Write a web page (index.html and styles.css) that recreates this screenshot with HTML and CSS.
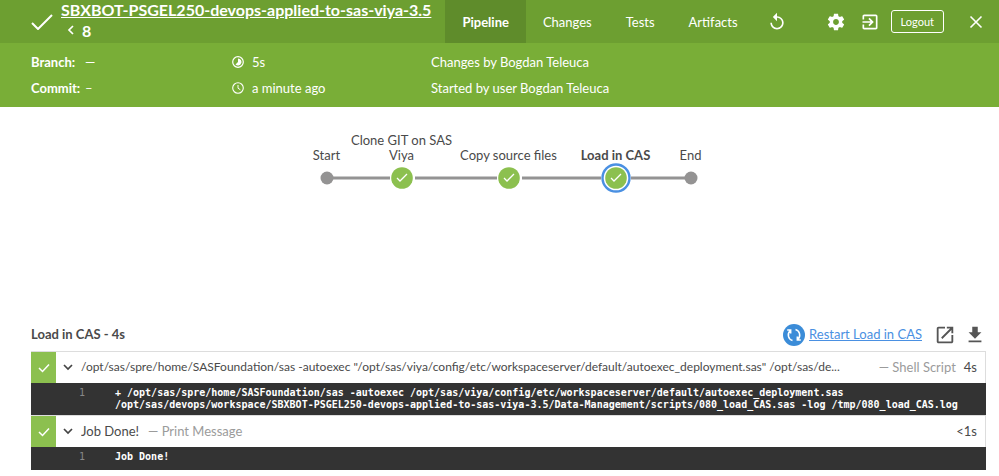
FILE: index.html
```html
<!DOCTYPE html>
<html lang="en">
<head>
    <meta charset="UTF-8">
    <meta name="viewport" content="width=device-width, initial-scale=1.0">
    <title>SBXBOT-PSGEL250-devops-applied-to-sas-viya-3.5 / 8</title>
    <link rel="stylesheet" href="styles.css">
</head>
<body>
    <header class="topbar">
        <svg class="status" width="22" height="16" viewBox="0 0 22 16"><path d="M1 9l6 6L21 1" fill="none" stroke="#fff" stroke-width="2"/></svg>
        <h1 class="title">
            <a href="#">SBXBOT-PSGEL250-devops-applied-to-sas-viya-3.5</a>
            <span class="run"><svg width="7" height="10" viewBox="0 0 7 10"><path d="M6 1L2 5l4 4" fill="none" stroke="#fff" stroke-width="1.700"/></svg>8</span>
        </h1>
        <nav class="tabs">
            <a class="tab active" href="#">Pipeline</a>
            <a class="tab" href="#">Changes</a>
            <a class="tab" href="#">Tests</a>
            <a class="tab" href="#">Artifacts</a>
        </nav>
        <div class="actions">
            <button class="icon-button rerun" aria-label="Rerun">
                <svg width="20" height="20" viewBox="0 0 24 24"><path fill="#fff" d="M12 5V1L7 6l5 5V7c3.31 0 6 2.690 6 6s-2.690 6-6 6-6-2.690-6-6H4c0 4.420 3.580 8 8 8s8-3.580 8-8-3.580-8-8-8z"/></svg>
            </button>
            <button class="icon-button settings" aria-label="Settings">
                <svg width="20" height="20" viewBox="0 0 24 24"><path fill="#fff" d="M19.430 12.980c.04-.32.07-.64.07-.98s-.03-.66-.07-.98l2.110-1.650c.19-.15.24-.42.12-.64l-2-3.460c-.12-.22-.39-.3-.61-.22l-2.490 1c-.52-.4-1.080-.73-1.690-.98l-.38-2.650C14.460 2.180 14.250 2 14 2h-4c-.25 0-.46.18-.49.42l-.38 2.650c-.61.25-1.170.59-1.690.98l-2.490-1c-.23-.09-.49 0-.61.22l-2 3.460c-.13.22-.07.49.12.64l2.110 1.650c-.04.32-.07.65-.07.98s.03.66.07.98l-2.110 1.650c-.19.15-.24.42-.12.64l2 3.460c.12.22.39.3.61.22l2.490-1c.52.4 1.080.73 1.690.98l.38 2.650c.03.24.24.42.49.42h4c.25 0 .46-.18.49-.42l.38-2.650c.61-.25 1.170-.59 1.690-.98l2.490 1c.23.09.49 0 .61-.22l2-3.460c.12-.22.07-.49-.12-.64l-2.110-1.650zM12 15.500c-1.930 0-3.500-1.570-3.500-3.500s1.570-3.500 3.500-3.500 3.500 1.570 3.500 3.500-1.570 3.500-3.500 3.500z"/></svg>
            </button>
            <button class="icon-button" aria-label="Go to classic">
                <svg width="20" height="20" viewBox="0 0 24 24"><path fill="#fff" d="M10.090 15.590L11.500 17l5-5-5-5-1.410 1.410L12.670 11H3v2h9.670l-2.580 2.590zM19 3H5c-1.110 0-2 .9-2 2v4h2V5h14v14H5v-4H3v4c0 1.100.89 2 2 2h14c1.100 0 2-.9 2-2V5c0-1.100-.9-2-2-2z"/></svg>
            </button>
            <button class="logout">Logout</button>
            <button class="icon-button close" aria-label="Close">
                <svg width="14" height="14" viewBox="0 0 14 14"><path d="M1.500 1.500l11 11M12.500 1.500l-11 11" fill="none" stroke="#fff" stroke-width="1.600"/></svg>
            </button>
        </div>
    </header>

    <section class="info">
        <div class="info-cell"><b>Branch:</b> —</div>
        <div class="info-cell">
            <svg width="12" height="12" viewBox="0 0 12 12"><circle cx="6" cy="6" r="5.300" fill="none" stroke="#fff" stroke-width="1.200"/><path d="M6 2.500a3.500 3.500 0 1 1-2.500 6L6 6z" fill="#fff"/></svg>
            5s
        </div>
        <div class="info-cell">Changes by Bogdan Teleuca</div>
        <div class="info-cell"><b>Commit:</b> –</div>
        <div class="info-cell">
            <svg width="12" height="12" viewBox="0 0 12 12"><circle cx="6" cy="6" r="5.300" fill="none" stroke="#fff" stroke-width="1.100"/><path d="M6 3v3.200l2.400 1.600" fill="none" stroke="#fff"/></svg>
            a minute ago
        </div>
        <div class="info-cell">Started by user Bogdan Teleuca</div>
    </section>

    <main class="content">
        <div class="graph">
            <svg class="graph-lines" width="392" height="30" viewBox="0 0 392 30">
                <path d="M14 15H77M102 15H184M209 15H288M318 15H378" stroke="#949393" stroke-width="3"/>
                <circle cx="14" cy="15" r="6.500" fill="#949393"/>
                <circle cx="89" cy="15" r="10.800" fill="#8cc04f"/>
                <circle cx="196" cy="15" r="10.800" fill="#8cc04f"/>
                <circle cx="303" cy="15" r="13.500" fill="#fff" stroke="#4a90e2" stroke-width="2.400"/>
                <circle cx="303" cy="15" r="10.800" fill="#8cc04f"/>
                <circle cx="378" cy="15" r="6.500" fill="#949393"/>
                <path d="M84 15l3 3 7-7M191 15l3 3 7-7M298 15l3 3 7-7" fill="none" stroke="#fff" stroke-width="1.300"/>
            </svg>
            <div class="node node-start">Start</div>
            <div class="node node-clone">Clone GIT on SAS Viya</div>
            <div class="node node-copy">Copy source files</div>
            <div class="node node-load">Load in CAS</div>
            <div class="node node-end">End</div>
        </div>

        <div class="log-header">
            <h2>Load in CAS - 4s</h2>
            <a class="restart" href="#">
                <svg width="22" height="22" viewBox="0 0 22 22"><circle cx="11" cy="11" r="11" fill="#3b8cd8"/><path d="M9.500 16.500A5.800 5.800 0 0 1 7 6.800M4.200 6h3.500v3.500M12.500 5.500a5.800 5.800 0 0 1 2.500 9.700M17.800 16h-3.500v-3.500" fill="none" stroke="#fff" stroke-width="1.500"/></svg>
                <span>Restart Load in CAS</span>
            </a>
            <button class="icon-button" aria-label="Open log">
                <svg width="22" height="22" viewBox="0 0 24 24"><path fill="#555" d="M19 19H5V5h7V3H5c-1.110 0-2 .9-2 2v14c0 1.100.89 2 2 2h14c1.100 0 2-.9 2-2v-7h-2v7zM14 3v2h3.590l-9.830 9.830 1.410 1.410L19 6.410V10h2V3h-7z"/></svg>
            </button>
            <button class="icon-button" aria-label="Download log">
                <svg width="22" height="22" viewBox="0 0 24 24"><path fill="#555" d="M19 9h-4V3H9v6H5l7 7 7-7zM5 18v2h14v-2H5z"/></svg>
            </button>
        </div>

        <div class="step">
            <div class="step-status"><svg width="12" height="10" viewBox="0 0 12 10"><path d="M1 5l3.500 3.500L11 1.500" fill="none" stroke="#fff" stroke-width="1.500"/></svg></div>
            <svg class="chevron" width="10" height="7" viewBox="0 0 10 7"><path d="M1 1l4 4 4-4" fill="none" stroke="#444" stroke-width="1.700"/></svg>
            <div class="step-name step-command">/opt/sas/spre/home/SASFoundation/sas -autoexec "/opt/sas/viya/config/etc/workspaceserver/default/autoexec_deployment.sas" /opt/sas/de...</div>
            <div class="step-type">— Shell Script</div>
            <div class="step-time">4s</div>
        </div>
        <div class="console">
            <span class="line-number">1</span>
            <code>+ /opt/sas/spre/home/SASFoundation/sas -autoexec /opt/sas/viya/config/etc/workspaceserver/default/autoexec_deployment.sas /opt/sas/devops/workspace/SBXBOT-PSGEL250-devops-applied-to-sas-viya-3.5/Data-Management/scripts/080_load_CAS.sas -log /tmp/080_load_CAS.log</code>
        </div>
        <div class="step">
            <div class="step-status"><svg width="12" height="10" viewBox="0 0 12 10"><path d="M1 5l3.500 3.500L11 1.500" fill="none" stroke="#fff" stroke-width="1.500"/></svg></div>
            <svg class="chevron" width="10" height="7" viewBox="0 0 10 7"><path d="M1 1l4 4 4-4" fill="none" stroke="#444" stroke-width="1.700"/></svg>
            <div class="step-name">Job Done!</div>
            <div class="step-type">— Print Message</div>
            <div class="step-time">&lt;1s</div>
        </div>
        <div class="console last">
            <span class="line-number">1</span>
            <code>Job Done!</code>
        </div>
    </main>
</body>
</html>
```

FILE: styles.css
```css
* {
    box-sizing: border-box;
}
body {
    margin: 0;
    background: white;
    color: #4a4a4a;
    font-family: Lato, sans-serif;
    font-size: 13px;
    line-height: 16px;
}
button {
    font-family: inherit;
    cursor: pointer;
}
.topbar {
    display: flex;
    align-items: center;
    height: 43px;
    padding: 0 16px 0 31px;
    background: #6d9f31;
    color: white;
}
.status {
    flex: none;
}
.title {
    flex: 1;
    margin: 0 0 0 8px;
    padding-bottom: 4px;
    font-size: 16px;
    line-height: 21px;
    white-space: nowrap;
}
.title a {
    color: white;
}
.run {
    display: flex;
    align-items: center;
    gap: 8px;
    padding-left: 6px;
}
.tabs {
    display: flex;
    align-self: stretch;
}
.tab {
    display: flex;
    align-items: center;
    padding: 0 17px;
    color: white;
    text-decoration: none;
}
.tab.active {
    background: #5f8c2b;
    font-weight: bold;
}
.actions {
    display: flex;
    align-items: center;
    gap: 11px;
    padding-left: 12px;
}
.icon-button {
    display: flex;
    padding: 0;
    border: 0;
    background: none;
}
.rerun {
    margin-right: 28px;
}
.settings {
    margin-right: 3px;
}
.logout {
    height: 23px;
    padding: 0 9px;
    border: 1px solid white;
    border-radius: 3px;
    background: none;
    color: white;
    font-size: 11px;
}
.close {
    margin-left: 14px;
}
.info {
    display: grid;
    grid-template-columns: 201px 199px 1fr;
    grid-auto-rows: 26px;
    padding: 6px 13px 6px 31px;
    background: #79ae37;
    color: white;
}
.info-cell {
    display: flex;
    align-items: center;
    gap: 8px;
}
.info-cell b {
    width: 46px;
}
.content {
    padding: 0 13px 0 31px;
}
.graph {
    position: relative;
    width: 392px;
    height: 212px;
    margin: 0 auto;
}
.graph-lines {
    position: absolute;
    top: 56px;
    left: 0;
}
.node {
    position: absolute;
    bottom: 156px;
    width: 110px;
    line-height: 15px;
    text-align: center;
    transform: translateX(-50%);
}
.node-start {
    left: 14px;
}
.node-clone {
    left: 89px;
}
.node-copy {
    left: 196px;
}
.node-load {
    left: 303px;
    font-weight: bold;
}
.node-end {
    left: 378px;
}
.log-header {
    display: flex;
    align-items: center;
    gap: 8px;
    height: 32px;
}
.log-header h2 {
    flex: 1;
    margin: 0;
    padding-bottom: 2px;
    font-size: 13px;
}
.restart {
    display: flex;
    align-items: center;
    gap: 4px;
    margin-right: 4px;
    color: #4a90e2;
}
.restart span {
    padding-bottom: 2px;
    text-decoration: underline;
}
.step {
    display: flex;
    align-items: center;
    height: 32px;
    padding-right: 8px;
    border: solid #ddd;
    border-width: 1px 1px 0 0;
}
.step-status {
    display: flex;
    flex: none;
    align-items: center;
    justify-content: center;
    align-self: stretch;
    width: 25px;
    background: #8cc04f;
}
.chevron {
    flex: none;
    margin: 0 8px 0 7px;
}
.step-name,
.step-type,
.step-time {
    padding-bottom: 2px;
}
.step-name {
    overflow: hidden;
    text-overflow: ellipsis;
    white-space: nowrap;
}
.step-command {
    flex: 1;
    font-size: 12px;
}
.step-type {
    flex: none;
    margin-left: 9px;
    color: #9b9b9b;
}
.step-time {
    margin-left: auto;
    padding-left: 8px;
}
.console {
    display: flex;
    padding: 4px 8px 4px 48px;
    background: #333;
    color: white;
    font-family: "DejaVu Sans Mono", monospace;
    font-size: 10px;
    line-height: 12px;
}
.console.last {
    padding-bottom: 7px;
}
.console code {
    font-family: inherit;
    font-weight: bold;
}
.line-number {
    flex: none;
    width: 36px;
    color: #888;
}
```
